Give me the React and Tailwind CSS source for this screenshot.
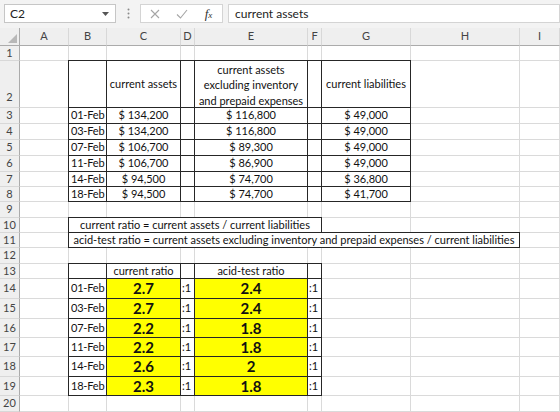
import React from "react";

const COLS = "grid grid-cols-[20px_49px_38px_74px_14px_113px_14px_89px_109px_40px] grid-rows-[18px_15px_47px_16px_16px_16px_16px_15px_15px_16px_15px_15px_16px_15px_20px_20px_19px_19px_20px_19px_16px]";

const GRID = "border-r border-b border-[#dadada]";
const BOX = "border border-[#262626] -ml-px -mt-px";

function Cell({ span = "", b = false, cls = "", children }) {
  return (
    <div className={`${b ? BOX : GRID} ${span} flex min-w-0 overflow-visible whitespace-nowrap ${cls}`}>
      {children}
    </div>
  );
}

function RowHead({ n, cls = "items-center" }) {
  return (
    <div className={`bg-[#efefef] border-r border-r-[#ababab] border-b border-b-[#d8d8d8] flex justify-center text-[#444] text-[11px] ${cls}`}>
      {n}
    </div>
  );
}

const dates = ["01-Feb", "03-Feb", "07-Feb", "11-Feb", "14-Feb", "18-Feb"];
const cA = ["$ 134,200", "$ 134,200", "$ 106,700", "$ 106,700", "$ 94,500", "$ 94,500"];
const eA = ["$ 116,800", "$ 116,800", "$ 89,300", "$ 86,900", "$ 74,700", "$ 74,700"];
const gA = ["$ 49,000", "$ 49,000", "$ 49,000", "$ 49,000", "$ 36,800", "$ 41,700"];
const cr = ["2.7", "2.7", "2.2", "2.2", "2.6", "2.3"];
const at = ["2.4", "2.4", "1.8", "1.8", "2", "1.8"];

function Plain({ n }) {
  return (
    <>
      <RowHead n={n} />
      {Array.from({ length: 9 }).map((_, i) => (
        <Cell key={i} />
      ))}
    </>
  );
}

export default function App() {
  const letters = ["A", "B", "C", "D", "E", "F", "G", "H", "I"];
  return (
    <div className="w-[560px] h-[412px] overflow-hidden bg-white font-['Lato','Liberation_Sans',sans-serif] text-[11px] text-[#111]">
      {/* toolbar */}
      <div className="h-[28px] bg-[#f3f3f3] flex items-start pt-[4px] pl-[4px]">
        <div className="w-[112px] h-[19px] bg-white border border-[#c6c6c6] flex items-center justify-between pl-[5px] pr-[6px] text-[12px] text-[#222]">
          <span>C2</span>
          <svg width="7" height="4" viewBox="0 0 7 4"><path d="M0 0h7L3.5 4z" fill="#555" /></svg>
        </div>
        <div className="w-[24px] h-[19px] flex items-center justify-center">
          <svg width="3" height="11" viewBox="0 0 3 11"><circle cx="1.5" cy="1.5" r="1" fill="#8a8a8a" /><circle cx="1.5" cy="5.5" r="1" fill="#8a8a8a" /><circle cx="1.5" cy="9.5" r="1" fill="#8a8a8a" /></svg>
        </div>
        <div className="w-[83px] h-[19px] bg-white border border-[#d4d4d4] flex items-center">
          <div className="w-[28px] flex justify-center">
            <svg width="10" height="10" viewBox="0 0 10 10"><path d="M1 1l8 8M9 1l-8 8" stroke="#a6a6a6" strokeWidth="1.1" /></svg>
          </div>
          <div className="w-[26px] flex justify-center">
            <svg width="12" height="10" viewBox="0 0 12 10"><path d="M1 5.5l3.5 3.5L11 1" stroke="#a6a6a6" strokeWidth="1.1" fill="none" /></svg>
          </div>
          <div className="w-[27px] flex justify-center items-baseline font-['Liberation_Serif',serif] italic text-[#333] leading-none">
            <span className="text-[13px]">f</span>
            <span className="text-[9px]">x</span>
          </div>
        </div>
        <div className="ml-[5px] flex-1 h-[19px] bg-white border border-[#d4d4d4] flex items-center pl-[6px] text-[12px] text-[#222]">
          current assets
        </div>
      </div>

      <div className={COLS}>
        {/* column headers */}
        <div className="bg-[#efefef] border-r border-r-[#ababab] border-b border-b-[#ababab] flex items-end justify-end p-[2px]">
          <svg width="9" height="9" viewBox="0 0 9 9"><path d="M9 0V9H0z" fill="#b8b8b8" /></svg>
        </div>
        {letters.map((l) => (
          <div key={l} className="bg-[#efefef] border-r border-r-[#d8d8d8] border-b border-b-[#ababab] flex items-center justify-center text-[#444] text-[11px]">
            {l}
          </div>
        ))}

        <Plain n="1" />

        {/* row 2 */}
        <RowHead n="2" cls="items-end pb-[2px]" />
        <Cell />
        <Cell b />
        <Cell b cls="items-center justify-center">current assets</Cell>
        <Cell b />
        <Cell b cls="flex-col items-center justify-center leading-[15.5px] pt-[2px]">
          <span>current assets</span>
          <span>excluding inventory</span>
          <span>and prepaid expenses</span>
        </Cell>
        <Cell b />
        <Cell b cls="items-center justify-center">current liabilities</Cell>
        <Cell />
        <Cell />

        {dates.map((d, i) => (
          <React.Fragment key={d}>
            <RowHead n={String(i + 3)} />
            <Cell />
            <Cell b cls="items-center pl-[2px] tracking-[-0.2px]">{d}</Cell>
            <Cell b cls="items-center justify-center">{cA[i]}</Cell>
            <Cell b />
            <Cell b cls="items-center justify-center">{eA[i]}</Cell>
            <Cell b />
            <Cell b cls="items-center justify-center">{gA[i]}</Cell>
            <Cell />
            <Cell />
          </React.Fragment>
        ))}

        <Plain n="9" />

        {/* row 10 */}
        <RowHead n="10" />
        <Cell />
        <Cell b span="col-span-5" cls="items-center justify-center">
          current ratio = current assets / current liabilities
        </Cell>
        <Cell />
        <Cell />
        <Cell />

        {/* row 11 */}
        <RowHead n="11" />
        <Cell />
        <Cell b span="col-span-7" cls="items-center justify-center">
          acid-test ratio = current assets excluding inventory and prepaid expenses / current liabilities
        </Cell>
        <Cell />

        <Plain n="12" />

        {/* row 13 */}
        <RowHead n="13" />
        <Cell />
        <Cell b />
        <Cell b cls="items-center justify-center">current ratio</Cell>
        <Cell b />
        <Cell b cls="items-center justify-center">acid-test ratio</Cell>
        <Cell b />
        <Cell />
        <Cell />
        <Cell />

        {dates.map((d, i) => (
          <React.Fragment key={"r" + d}>
            <RowHead n={String(i + 14)} />
            <Cell />
            <Cell b cls="items-center pl-[2px] tracking-[-0.2px]">{d}</Cell>
            <Cell b cls="items-center justify-center bg-[#ffff00] font-bold text-[15px]">{cr[i]}</Cell>
            <Cell b cls="items-center pl-[1px]">:1</Cell>
            <Cell b cls="items-center justify-center bg-[#ffff00] font-bold text-[15px]">{at[i]}</Cell>
            <Cell b cls="items-center pl-[1px]">:1</Cell>
            <Cell />
            <Cell />
            <Cell />
          </React.Fragment>
        ))}

        <Plain n="20" />
      </div>
    </div>
  );
}
